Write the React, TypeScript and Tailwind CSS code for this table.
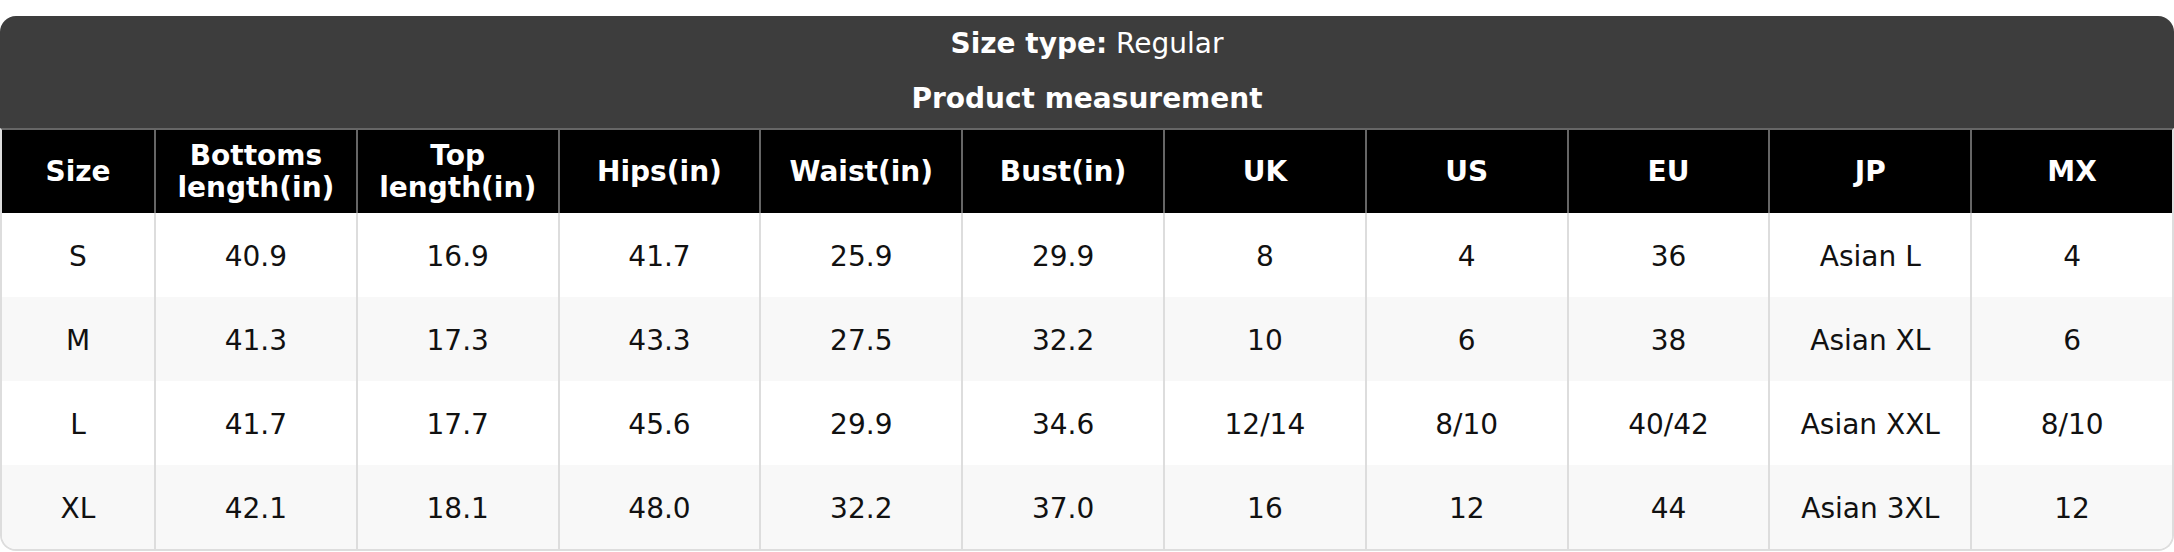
const columns = [
  "Size",
  "Bottoms length(in)",
  "Top length(in)",
  "Hips(in)",
  "Waist(in)",
  "Bust(in)",
  "UK",
  "US",
  "EU",
  "JP",
  "MX",
];

const rows = [
  ["S", "40.9", "16.9", "41.7", "25.9", "29.9", "8", "4", "36", "Asian L", "4"],
  ["M", "41.3", "17.3", "43.3", "27.5", "32.2", "10", "6", "38", "Asian XL", "6"],
  ["L", "41.7", "17.7", "45.6", "29.9", "34.6", "12/14", "8/10", "40/42", "Asian XXL", "8/10"],
  ["XL", "42.1", "18.1", "48.0", "32.2", "37.0", "16", "12", "44", "Asian 3XL", "12"],
];

export default function App() {
  return (
    <div className="bg-white pt-4 font-['DejaVu_Sans',sans-serif] text-[28px]">
      {/* Title block */}
      <div className="flex h-[112px] flex-col items-center rounded-t-2xl bg-[#3d3d3d] text-white">
        <p className="mt-[7px] leading-[42px]">
          <span className="font-bold">Size type:</span> Regular
        </p>
        <p className="mt-[13px] font-bold leading-[42px]">Product measurement</p>
      </div>

      {/* Table */}
      <div className="overflow-hidden rounded-b-2xl border-x-2 border-b-2 border-t-2 border-x-[#dddddd] border-b-[#dddddd] border-t-[#666666]">
        <div className="grid h-[83px] grid-cols-[152px_repeat(10,1fr)] bg-black font-bold text-white">
          {columns.map((col, i) => (
            <div
              key={col}
              className={`flex items-center justify-center px-2 text-center leading-[32px] ${
                i > 0 ? "border-l-2 border-[#666666]" : ""
              }`}
            >
              {col}
            </div>
          ))}
        </div>
        {rows.map((row, r) => (
          <div
            key={row[0]}
            className={`grid h-[84px] grid-cols-[152px_repeat(10,1fr)] text-[#111111] ${
              r % 2 === 1 ? "bg-[#f8f8f8]" : "bg-white"
            }`}
          >
            {row.map((cell, i) => (
              <div
                key={i}
                className={`flex items-center justify-center pt-[3px] ${
                  i > 0 ? "border-l-2 border-[#dddddd]" : ""
                }`}
              >
                {cell}
              </div>
            ))}
          </div>
        ))}
      </div>
    </div>
  );
}
